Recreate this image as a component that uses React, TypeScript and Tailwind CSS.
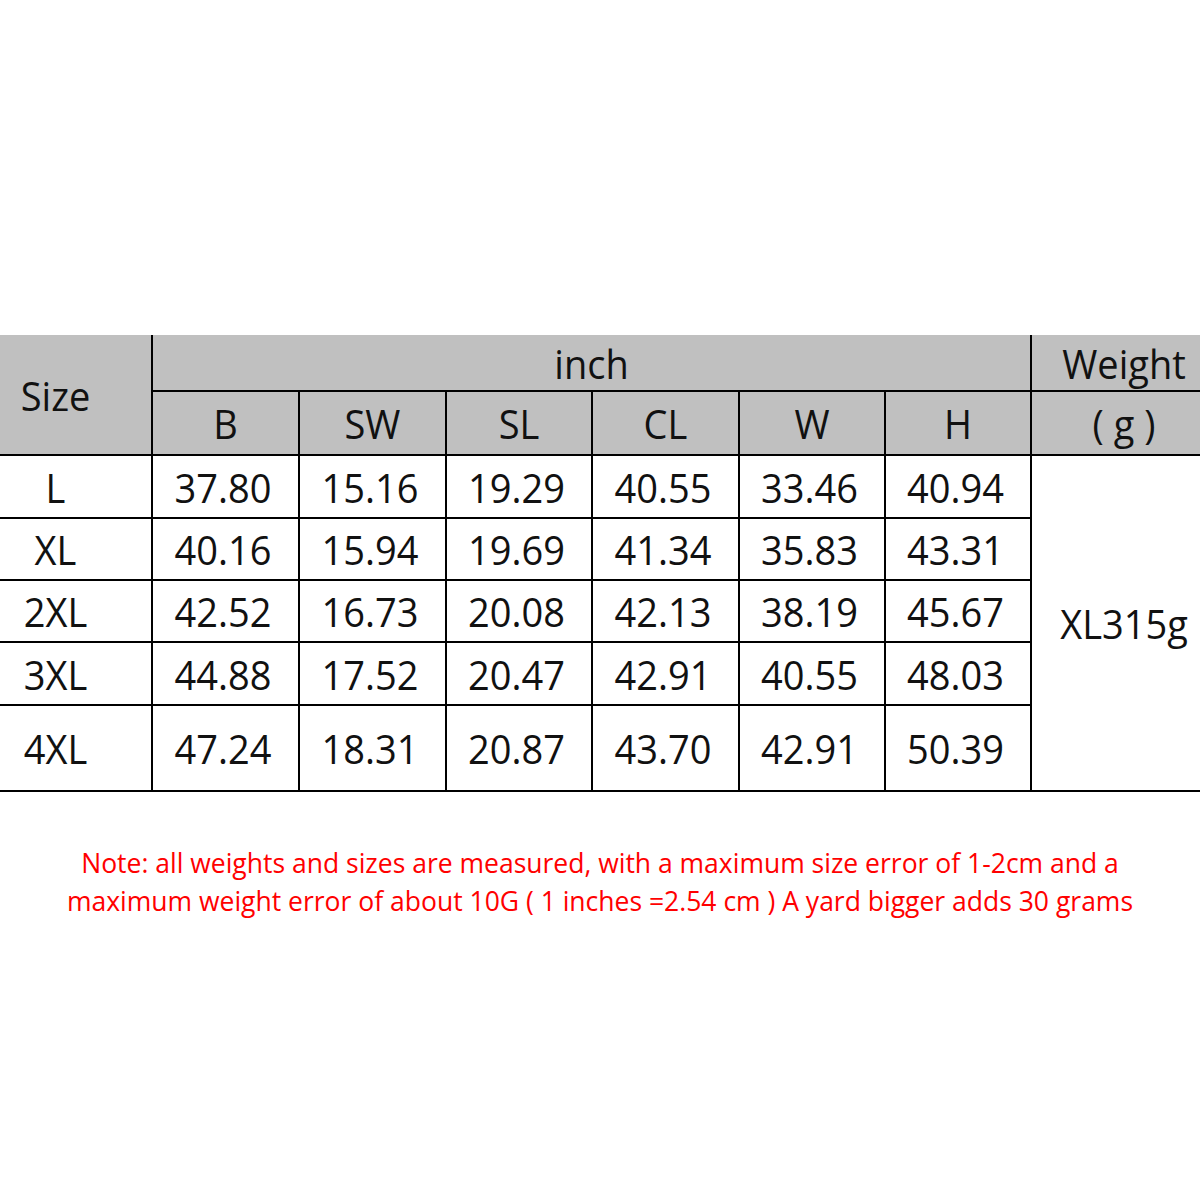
const cols = ['B', 'SW', 'SL', 'CL', 'W', 'H'];

const rows: { size: string; values: string[]; height: string }[] = [
	{ size: 'L', values: ['37.80', '15.16', '19.29', '40.55', '33.46', '40.94'], height: 'h-[63px]' },
	{ size: 'XL', values: ['40.16', '15.94', '19.69', '41.34', '35.83', '43.31'], height: 'h-[62px]' },
	{ size: '2XL', values: ['42.52', '16.73', '20.08', '42.13', '38.19', '45.67'], height: 'h-[62px]' },
	{ size: '3XL', values: ['44.88', '17.52', '20.47', '42.91', '40.55', '48.03'], height: 'h-[63px]' },
	{ size: '4XL', values: ['47.24', '18.31', '20.87', '43.70', '42.91', '50.39'], height: 'h-[86px]' },
];

function Txt({ children }: { children: React.ReactNode }) {
	return <span className="inline-block scale-y-[1.06]">{children}</span>;
}

export default function App() {
	return (
		<div className="w-[1200px] h-[1200px] bg-white pt-[335px] overflow-hidden" style={{ fontFamily: '"Open Sans", "Noto Sans", sans-serif' }}>
			<table className="w-full table-fixed border-collapse text-[#111] text-[38px] leading-none">
				<colgroup>
					<col className="w-[152px]" />
					{cols.map((c, i) => (
						<col key={c} className={i === 2 || i === 4 || i === 5 ? 'w-[146px]' : 'w-[147px]'} />
					))}
					<col className="w-[169px]" />
				</colgroup>
				<thead>
					<tr className="h-[56px] bg-[#c0c0c0]">
						<th rowSpan={2} className="font-normal text-center pr-[40px] border-b-2 border-r-2 border-black">
							<Txt>Size</Txt>
						</th>
						<th colSpan={6} className="font-normal text-center border-b-2 border-r-2 border-black">
							<Txt>inch</Txt>
						</th>
						<th className="font-normal text-center pl-[16px] border-b-2 border-black">
							<Txt>Weight</Txt>
						</th>
					</tr>
					<tr className="h-[64px] bg-[#c0c0c0]">
						{cols.map(c => (
							<th key={c} className="font-normal text-center border-b-2 border-r-2 border-black">
								<Txt>{c}</Txt>
							</th>
						))}
						<th className="font-normal text-center pl-[16px] border-b-2 border-black">
							<Txt>( g )</Txt>
						</th>
					</tr>
				</thead>
				<tbody>
					{rows.map((r, ri) => (
						<tr key={r.size} className={r.height}>
							<td className="text-center pr-[40px] border-b-2 border-r-2 border-black">
								<Txt>{r.size}</Txt>
							</td>
							{r.values.map((v, vi) => (
								<td key={vi} className="text-center pr-[5px] border-b-2 border-r-2 border-black">
									<Txt>{v}</Txt>
								</td>
							))}
							{ri === 0 && (
								<td rowSpan={5} className="text-center pl-[16px] border-b-2 border-black">
									<Txt>XL315g</Txt>
								</td>
							)}
						</tr>
					))}
				</tbody>
			</table>
			<p className="mt-[52px] text-center text-[#ff0000] text-[26.5px] leading-[38px]">
				Note: all weights and sizes are measured, with a maximum size error of 1-2cm and a
				<br />
				maximum weight error of about 10G ( 1 inches =2.54 cm ) A yard bigger adds 30 grams
			</p>
		</div>
	);
}
